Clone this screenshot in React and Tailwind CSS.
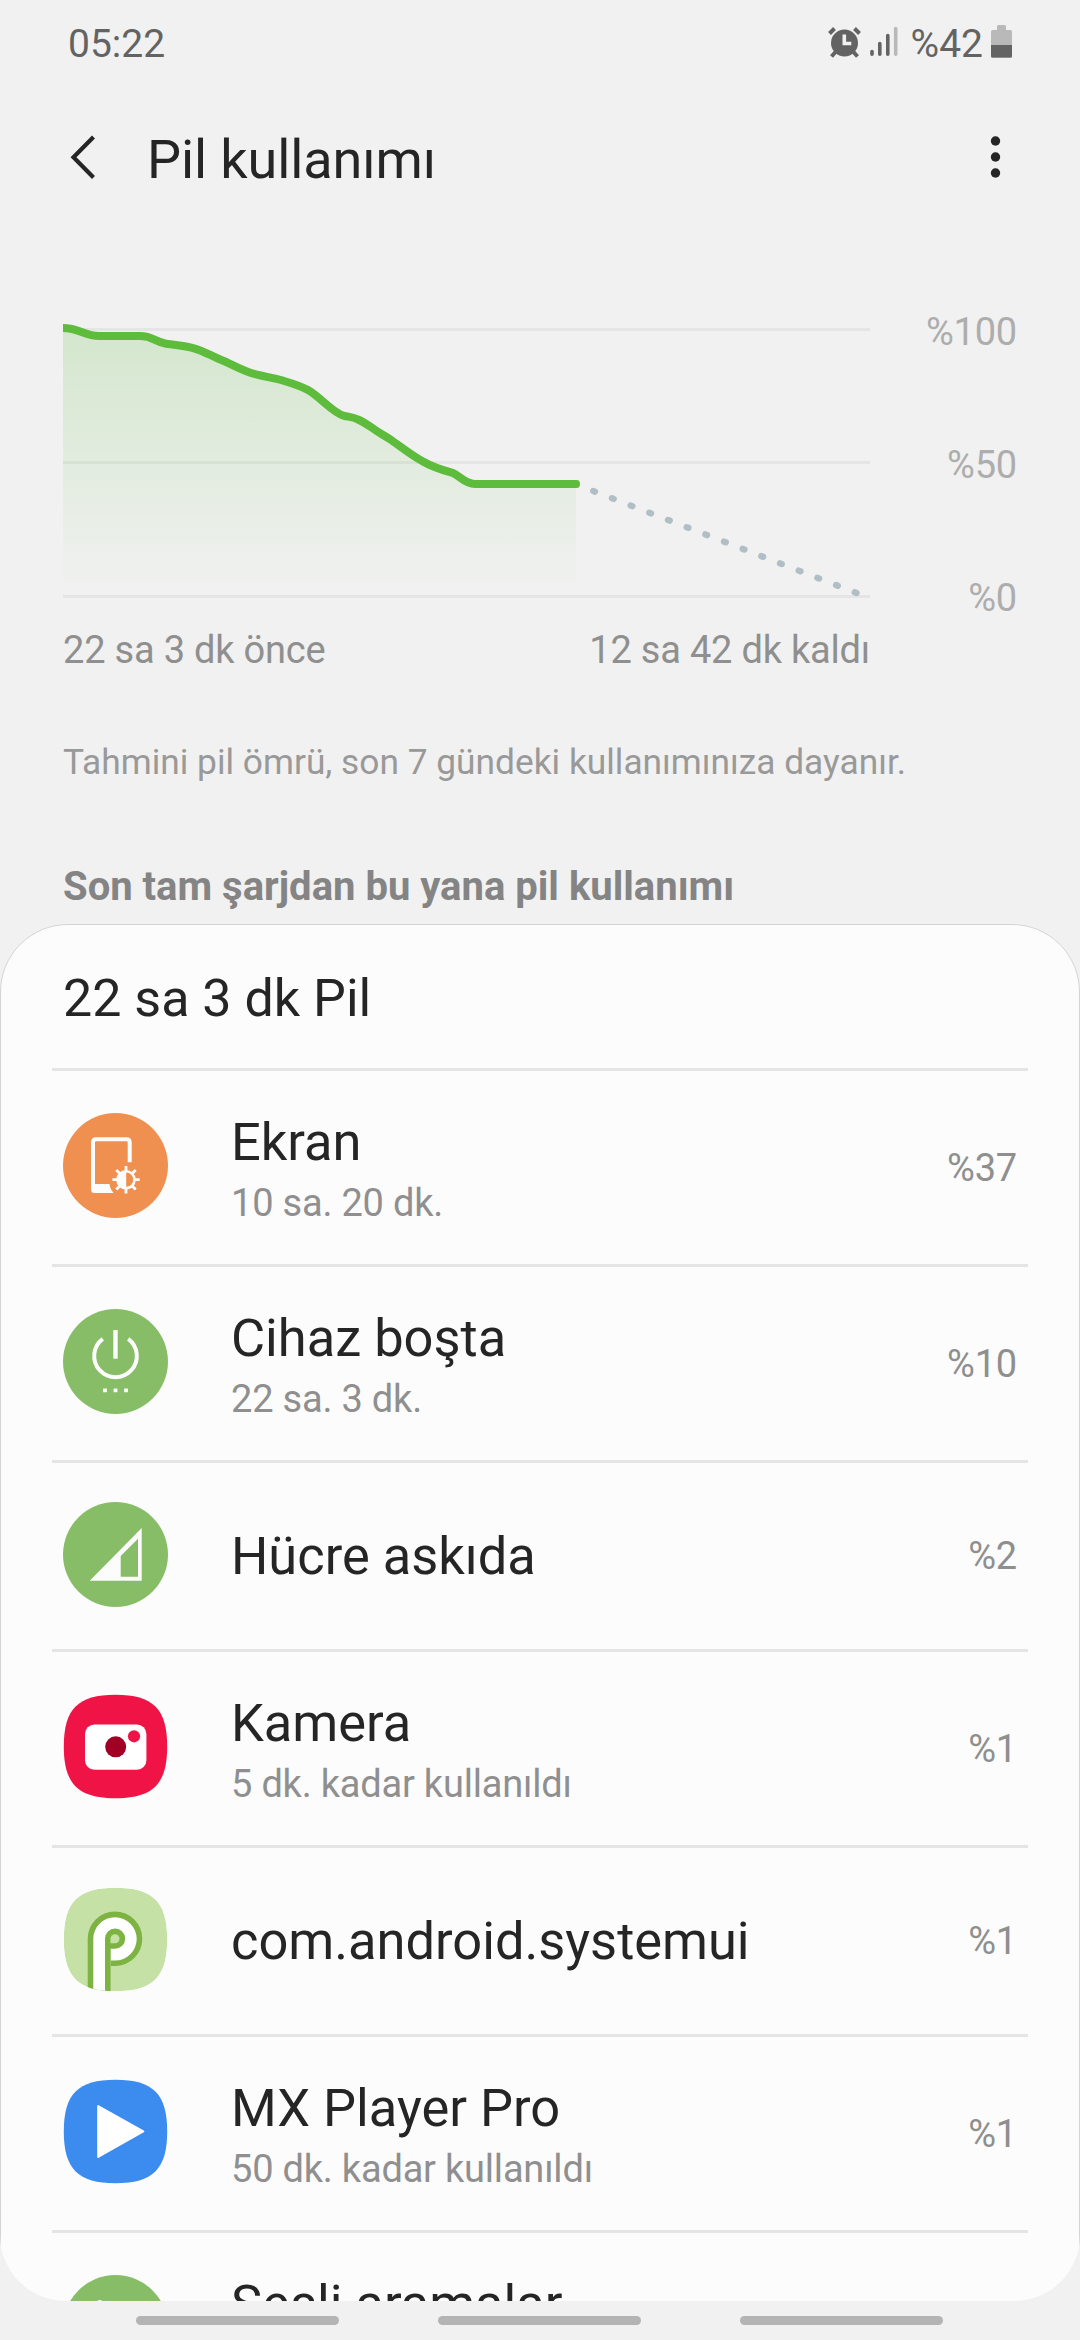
const SQUIRCLE = 'M52.5 .8C90 .8 104.2 15 104.2 52.5S90 104.2 52.5 104.2 .8 90 .8 52.5 15 .8 52.5 .8Z'

const GREEN = '#87bd67'

function ScreenIcon() {
  return (
    <>
      <circle cx="52.5" cy="52.5" r="52.5" fill="#ef9051" />
      <path d="M66.7 49.3V29.5q0-3.2-3.2-3.2H33.2q-3.2 0-3.2 3.2V74" fill="none" stroke="#fcfcfc" strokeWidth="4" />
      <path d="M28 71H46.3q.8 5.2 4.2 9H31.5q-3.5 0-3.5-3.5Z" fill="#fcfcfc" />
      <path
        d="M63 53v27.4M49.3 66.7h27.4M53.3 57l19.4 19.4M72.7 57 53.3 76.4"
        stroke="#fcfcfc"
        strokeWidth="2.8"
      />
      <circle cx="63" cy="66.7" r="9.8" fill="#fcfcfc" />
      <path d="M63.2 59.6a7.1 7.1 0 0 1 0 14.2Z" fill="#ef9051" />
    </>
  )
}

function IdleIcon() {
  return (
    <>
      <circle cx="52.5" cy="52.5" r="52.5" fill={GREEN} />
      <path d="M39.8 29.8a21.3 21.3 0 1 0 25.4 0" fill="none" stroke="#fcfcfc" strokeWidth="4" />
      <path d="M52.5 21v28.7" stroke="#fcfcfc" strokeWidth="4.4" />
      <path d="M40.1 79.5h3.8v3.8h-3.8zM50.6 79.5h3.8v3.8h-3.8zM61.1 79.5h3.8v3.8h-3.8z" fill="#fcfcfc" />
    </>
  )
}

function CellIcon() {
  return (
    <>
      <circle cx="52.5" cy="52.5" r="52.5" fill={GREEN} />
      <path
        d="M26.7 78.8 78.7 26v52.8ZM57.7 54v20.8H75V36.8Z"
        fill="#fcfcfc"
        fillRule="evenodd"
      />
    </>
  )
}

function CameraIcon() {
  return (
    <>
      <path d={SQUIRCLE} fill="#f01446" />
      <rect x="22" y="30.5" width="61.4" height="45.2" rx="9.5" fill="#fff" />
      <circle cx="52.7" cy="52.8" r="10.5" fill="#a00024" />
      <circle cx="71" cy="42.3" r="6.1" fill="#f01446" />
    </>
  )
}

function AndroidIcon() {
  return (
    <>
      <clipPath id="android-mask">
        <path d={SQUIRCLE} />
      </clipPath>
      <g clipPath="url(#android-mask)">
        <path d={SQUIRCLE} fill="#c5e1a5" />
        <path d="M24.7 110V51.7A27.3 27.3 0 1 1 52 79h-4.3v31Z" fill="#7cb342" />
        <path d="M30.3 110V51.7A21.7 21.7 0 1 1 52 73.6h-4.3V110Z" fill="#fff" />
        <path d="M42 110V51.7a10.1 10.1 0 1 1 10 10h-4.3V110Z" fill="#7cb342" />
        <path d="M47.5 51.7A4.5 4.5 0 1 1 52 56.2h-4.5Z" fill="#c5e1a5" />
      </g>
    </>
  )
}

function PlayerIcon() {
  return (
    <>
      <path d={SQUIRCLE} fill="#3c8cf0" />
      <path d="M35.2 27 80.3 52.4 35.2 78Z" fill="#fff" stroke="#fff" strokeWidth="2" strokeLinejoin="round" />
    </>
  )
}

function CallsIcon() {
  return (
    <>
      <circle cx="52.5" cy="52.5" r="52.5" fill={GREEN} />
      <path
        d="M36.5 25q3 0 4 3l4 10q1 3-1 5l-4 4q6 10 15 15l4-4q2-2 5-1l10 4q3 1 3 4-1 12-12 12C44 77 27 55 27 37q0-9 9.5-12Z"
        fill="#fcfcfc"
      />
    </>
  )
}

const apps = [
  { name: 'Ekran', usage: '10 sa. 20 dk.', percent: '%37', icon: ScreenIcon },
  { name: 'Cihaz boşta', usage: '22 sa. 3 dk.', percent: '%10', icon: IdleIcon },
  { name: 'Hücre askıda', percent: '%2', icon: CellIcon },
  { name: 'Kamera', usage: '5 dk. kadar kullanıldı', percent: '%1', icon: CameraIcon },
  { name: 'com.android.systemui', percent: '%1', icon: AndroidIcon },
  { name: 'MX Player Pro', usage: '50 dk. kadar kullanıldı', percent: '%1', icon: PlayerIcon },
  { name: 'Sesli aramalar', usage: '\u00a0', icon: CallsIcon },
]

function StatusBar() {
  return (
    <div className="flex h-[87px] items-center justify-between px-[68px] pt-0.5 text-[39px] leading-none text-[#636363]">
      <span>05:22</span>
      <div className="flex items-center">
        <svg className="mb-[5px] h-8 w-[33px]" viewBox="0 0 33 32">
          <circle cx="16.5" cy="17" r="13.5" fill="#636363" />
          <path d="M1.5 7.5l5-5M31.5 7.5l-5-5M7.5 26l-4 4.5M25.5 26l4 4.5" stroke="#636363" strokeWidth="4" />
          <path d="M16.3 8.5v9h7" fill="none" stroke="#f1f1f1" strokeWidth="3.6" />
        </svg>
        <svg className="mb-1.5 ml-[9px] h-[31px] w-7" viewBox="0 0 28 31">
          <g strokeWidth="3.6" strokeLinecap="round" stroke="#636363">
            <path d="M2 25.5v2.8M9.8 17.5v10.8M17.8 9.5v18.8" />
            <path d="M25.7 2.5v25.8" stroke="#b9b9b9" />
          </g>
        </svg>
        <span className="ml-[13px]">%42</span>
        <svg className="mb-1.5 ml-2 h-[33px] w-[21px]" viewBox="0 0 21 33">
          <path
            d="M6 1.5Q6 0 7.5 0h6Q15 0 15 1.5V5h4.5Q21 5 21 6.5v25q0 1.5-1.5 1.5h-18Q0 33 0 31.5v-25Q0 5 1.5 5H6Z"
            fill="#b9b9b9"
          />
          <path d="M0 20h21v11q0 1.5-1.5 1.5h-18Q0 32.5 0 31Z" fill="#636363" />
        </svg>
      </div>
    </div>
  )
}

function Header() {
  return (
    <header className="flex h-[139px] items-center pl-[70px] pr-[79px] pt-1.5">
      <svg className="mb-1.5 h-11 w-[26px]" viewBox="0 0 26 44" fill="none" stroke="#252525" strokeWidth="4.2">
        <path d="M23.5 2 3.5 22.2l20 20.2" />
      </svg>
      <h1 className="ml-[51px] flex-1 text-[54px] leading-none tracking-[-0.1px] text-[#252525]">Pil kullanımı</h1>
      <svg className="mb-1.5 h-11 w-[11px]" viewBox="0 0 11 44" fill="#252525">
        <circle cx="5.5" cy="6" r="4.7" />
        <circle cx="5.5" cy="22" r="4.7" />
        <circle cx="5.5" cy="38" r="4.7" />
      </svg>
    </header>
  )
}

const CURVE =
  'M0 18C16 18 22 26 36 26H77C90 26 92 32 103 33.7C115 35.5 121 35.5 131 38.3C141 41 149 46.5 162 51.5C173 56.5 182 62 194 64.7C203 67 209 67.5 218 70C228 73 237 75.5 245 80C258 87.5 270 103 281 105.8C286 107 290 107 295 109.5C301 112 307 116.5 313 120.5C318 124 323 126.5 328.5 130.2C339 137.5 349 145.5 360 151.5C370 157.5 381 160.5 390 163C397 166 402 174 412 174H513'

function BatteryChart() {
  return (
    <section className="mt-[84px] px-[63px] text-[38px] leading-[44px] tracking-[-0.2px]">
      <div className="flex justify-between">
        <svg className="h-[310px] w-[807px]" viewBox="0 0 807 310" fill="none">
          <defs>
            <linearGradient id="level-fill" gradientUnits="userSpaceOnUse" x1="0" y1="18" x2="0" y2="284">
              <stop offset="0" stopColor="#5dbc3c" stopOpacity=".2" />
              <stop offset="1" stopColor="#5dbc3c" stopOpacity="0" />
            </linearGradient>
          </defs>
          <path d="M0 19.5h807M0 152.5h807M0 286.5h807" stroke="#e5e5e5" strokeWidth="3" />
          <path d={`${CURVE}V284H0Z`} fill="url(#level-fill)" />
          <path d={CURVE} stroke="#5dbc3c" strokeWidth="8" />
          <path d="M511 170h2.5q3.5 0 3.5 4t-3.5 4H511Z" fill="#5dbc3c" />
          {/* remaining time estimate */}
          <path
            d="M530.3 181 794 283.2"
            stroke="#b0bec5"
            strokeWidth="6.4"
            strokeLinecap="round"
            strokeDasharray="1.8 18.23"
          />
        </svg>
        <div className="flex flex-col justify-between text-right text-[#adadad]">
          <span>%100</span>
          <span>%50</span>
          <span>%0</span>
        </div>
      </div>
      <div className="mt-2 flex w-[807px] justify-between text-[#8f8f8f]">
        <span>22 sa 3 dk önce</span>
        <span>12 sa 42 dk kaldı</span>
      </div>
    </section>
  )
}

function AppRow({ app }) {
  const Icon = app.icon

  return (
    <li
      className={`mx-[51px] flex items-center border-b-[3px] border-[#e5e5e5] px-[11px] ${
        app.usage ? 'h-[196px]' : 'h-[189px]'
      }`}
    >
      <svg className="mb-1 h-[105px] w-[105px] shrink-0" viewBox="0 0 105 105">
        <Icon />
      </svg>
      <div className="ml-[63px] flex-1">
        <p className={`text-[52.4px] leading-[60px] text-[#252525] ${app.usage ? 'pt-[3px]' : ''}`}>{app.name}</p>
        {app.usage && (
          <p className="mt-2 text-[38px] leading-[46px] tracking-[-0.2px] text-[#8f8f8f]">{app.usage}</p>
        )}
      </div>
      <span className="pt-px text-[38px] tracking-[-0.2px] text-[#8f8f8f]">{app.percent}</span>
    </li>
  )
}

export default function App() {
  return (
    <div className="flex h-[2340px] w-[1080px] flex-col overflow-hidden bg-[#f1f1f1] font-[Roboto,sans-serif]">
      <StatusBar />
      <Header />
      <BatteryChart />

      <p className="mt-[68px] px-[63px] text-[35.3px] leading-[44px] text-[#999999]">
        Tahmini pil ömrü, son 7 gündeki kullanımınıza dayanır.
      </p>
      <h2 className="mt-[81px] px-[63px] text-[40px] font-bold leading-[44px] text-[#848484]">
        Son tam şarjdan bu yana pil kullanımı
      </h2>

      <div className="mt-[15px] h-[1377px] shrink-0 overflow-hidden rounded-b-[66px]">
        <div className="h-[1500px] rounded-t-[68px] border border-[#d4d4d4] bg-[#fcfcfc]">
          <div className="mx-[51px] flex h-[146px] items-center border-b-[3px] border-[#e5e5e5] px-[11px] pt-[5px]">
            <h3 className="text-[52px] leading-[60px] text-[#252525]">22 sa 3 dk Pil</h3>
          </div>
          <ul>
            {apps.map((app) => (
              <AppRow key={app.name} app={app} />
            ))}
          </ul>
        </div>
      </div>

      <nav className="flex gap-[99px] px-[136px] pt-[15px]">
        <span className="h-[9px] w-[203px] rounded-full bg-[#b4b4b4]" />
        <span className="h-[9px] w-[203px] rounded-full bg-[#b4b4b4]" />
        <span className="h-[9px] w-[203px] rounded-full bg-[#b4b4b4]" />
      </nav>
    </div>
  )
}
